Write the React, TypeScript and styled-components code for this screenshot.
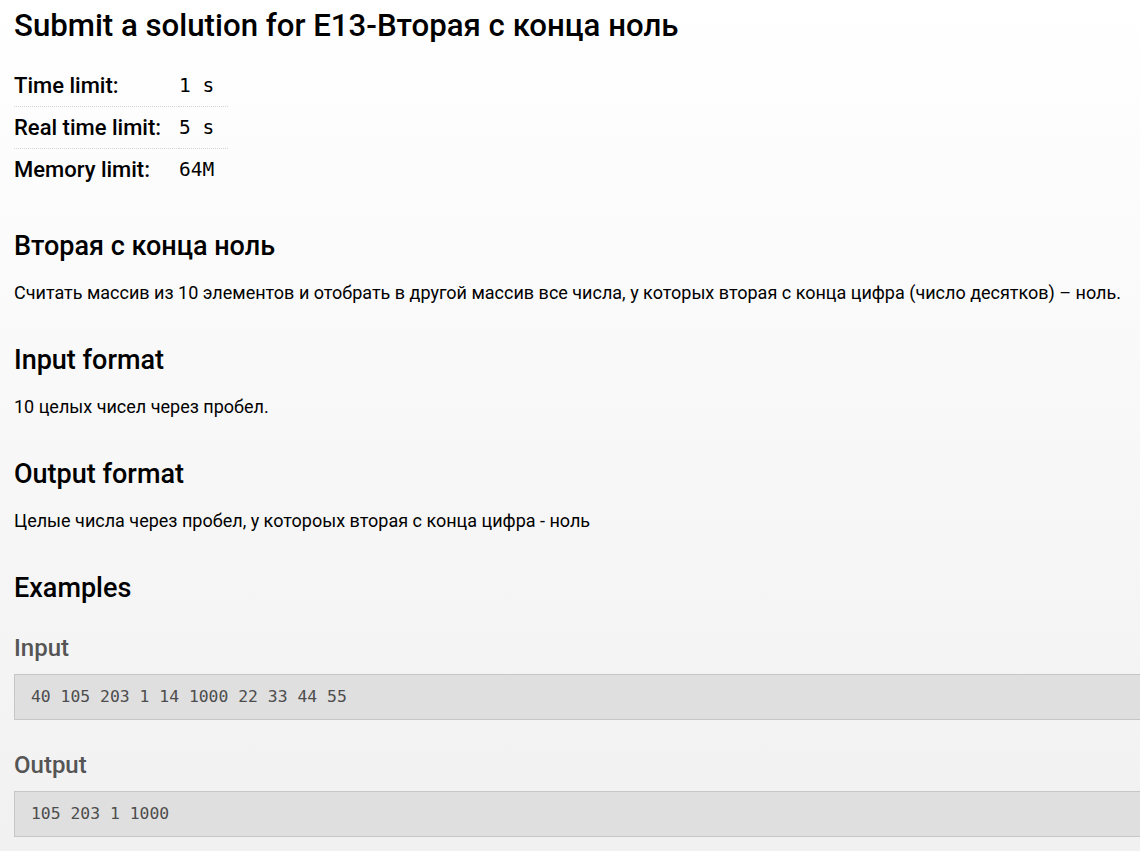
import styled, { createGlobalStyle } from "styled-components";

const GlobalStyle = createGlobalStyle`
  html, body {
    margin: 0;
    padding: 0;
  }
  body {
    min-height: 851px;
    background: linear-gradient(#ffffff 0px, #f1f1f1 851px);
    font-family: Roboto, "Noto Sans", sans-serif;
    color: #000;
  }
`;

const Page = styled.main`
  padding: 8px 0 40px 14px;
`;

const Title = styled.h1`
  margin: 0;
  font-size: 31.2px;
  line-height: 36px;
  font-weight: 500;
`;

const Limits = styled.table`
  margin-top: 21px;
  border-collapse: collapse;
  width: 214px;
`;

const LimitRow = styled.tr`
  & + & {
    border-top: 1px dotted #d4d4d4;
  }
`;

const LimitName = styled.th`
  padding: 0 18px 0 0;
  height: 41px;
  text-align: left;
  font-size: 22px;
  font-weight: 500;
  white-space: nowrap;
`;

const LimitValue = styled.td`
  width: 100%;
  padding: 0;
  font-family: "DejaVu Sans Mono", "Liberation Mono", monospace;
  font-size: 19.5px;
  white-space: pre;
`;

const Heading = styled.h2<{ $top?: number }>`
  margin: ${({ $top }) => $top ?? 40}px 0 0;
  font-size: 27px;
  line-height: 30px;
  font-weight: 500;
`;

const Text = styled.p`
  margin: 20px 0 0;
  font-size: 18px;
  line-height: 24px;
`;

const ExampleLabel = styled.h3`
  margin: 31px 0 0;
  font-size: 24px;
  line-height: 28px;
  font-weight: 500;
  color: #555;
`;

const Sample = styled.pre`
  margin: 12px 0 0;
  box-sizing: border-box;
  padding: 0 16px;
  height: 46px;
  line-height: 44px;
  background: #dfdfdf;
  border: 1px solid #c6c6c6;
  border-right: none;
  font-family: "DejaVu Sans Mono", "Liberation Mono", monospace;
  font-size: 16.4px;
  color: #4d4d4d;
`;

const limits = [
  ["Time limit:", "1 s"],
  ["Real time limit:", "5 s"],
  ["Memory limit:", "64M"],
];

export default function App() {
  return (
    <>
      <GlobalStyle />
      <Page>
        <Title>Submit a solution for E13-Вторая с конца ноль</Title>
        <Limits>
          <tbody>
            {limits.map(([name, value]) => (
              <LimitRow key={name}>
                <LimitName>{name}</LimitName>
                <LimitValue>{value}</LimitValue>
              </LimitRow>
            ))}
          </tbody>
        </Limits>

        <Heading $top={41}>Вторая с конца ноль</Heading>
        <Text>
          Считать массив из 10 элементов и отобрать в другой массив все числа, у
          которых вторая с конца цифра (число десятков) – ноль.
        </Text>

        <Heading>Input format</Heading>
        <Text>10 целых чисел через пробел.</Text>

        <Heading>Output format</Heading>
        <Text>Целые числа через пробел, у котороых вторая с конца цифра - ноль</Text>

        <Heading>Examples</Heading>
        <ExampleLabel>Input</ExampleLabel>
        <Sample>40 105 203 1 14 1000 22 33 44 55</Sample>
        <ExampleLabel>Output</ExampleLabel>
        <Sample>105 203 1 1000</Sample>
      </Page>
    </>
  );
}
